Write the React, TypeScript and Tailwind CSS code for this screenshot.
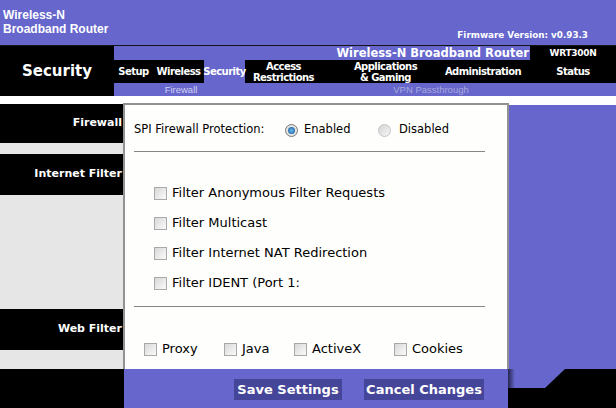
import React from "react";

const vd = "font-['DejaVu_Sans','Liberation_Sans',sans-serif]";
const ar = "font-['Liberation_Sans',Arial,sans-serif]";

function Check() {
  return (
    <span className="inline-block w-[13px] h-[13px] shrink-0 border border-[#a9a9a9] bg-linear-to-br from-[#d8d8d8] to-[#fbfbfb]" />
  );
}

function Radio({ on }: { on?: boolean }) {
  if (on) {
    return (
      <span className="w-[13px] h-[13px] shrink-0 rounded-full border border-[#7a7a7a] bg-[#e4e4e4] flex items-center justify-center">
        <span className="w-[7px] h-[7px] rounded-full bg-radial from-[#6ab8f0] to-[#14548f]" />
      </span>
    );
  }
  return (
    <span className="w-[13px] h-[13px] shrink-0 rounded-full border border-[#c4c4c4] bg-linear-to-br from-[#d4d4d4] to-[#f6f6f6]" />
  );
}

const navItems = [
  { label: "Setup", w: "w-[39px]" },
  { label: "Wireless", w: "w-[51px]" },
  { label: "Security", w: "w-[41px]", active: true },
  { label: "Access\nRestrictions", w: "w-[77px]" },
  { label: "Applications\n& Gaming", w: "w-[127px]" },
  { label: "Administration", w: "w-[68px]" },
];

const filters = [
  "Filter Anonymous Filter Requests",
  "Filter Multicast",
  "Filter Internet NAT Redirection",
  "Filter IDENT (Port 1:",
];

const webFilters = [
  { label: "Proxy", w: "w-[80px]" },
  { label: "Java", w: "w-[70px]" },
  { label: "ActiveX", w: "w-[100px]" },
  { label: "Cookies", w: "" },
];

export default function App() {
  return (
    <div className="w-[616px] h-[408px] overflow-hidden bg-white">
      {/* Top banner */}
      <div className="h-[45px] bg-[#6666cc] flex justify-between">
        <div className={`pl-[3px] pt-[8px] text-white font-bold text-[12px] leading-[14px] ${ar}`}>
          Wireless-N
          <br />
          Broadband Router
        </div>
        <div className={`self-end pb-[4px] pr-[28px] text-white font-bold text-[8.8px] leading-[11px] ${vd}`}>
          Firmware Version: v0.93.3
        </div>
      </div>
      <div className="h-px bg-[#151515]" />

      {/* Navigation */}
      <div className="h-[50px] flex">
        <div className={`w-[114px] bg-black flex items-center justify-center text-white font-bold text-[15px] ${vd}`}>
          Security
        </div>
        <div className="flex-1 flex flex-col">
          <div className="h-[14px] flex">
            <div className={`flex-1 bg-[#6666cc] text-right pr-px text-white font-bold text-[11.5px] leading-[14px] ${vd}`}>
              Wireless-N Broadband Router
            </div>
            <div className={`w-[86px] bg-black text-center text-white font-bold text-[9px] tracking-[-0.3px] leading-[14px] ${vd}`}>
              WRT300N
            </div>
          </div>
          <div className={`h-[23px] bg-black flex text-white font-bold text-[10px] tracking-[-0.55px] leading-[11px] ${vd}`}>
            {navItems.map((n) => (
              <div
                key={n.label}
                className={`${n.w} flex items-center justify-center text-center whitespace-pre ${n.active ? "bg-[#6666cc]" : ""}`}
              >
                {n.label}
              </div>
            ))}
            <div className="w-[13px]" />
            <div className="w-[86px] flex items-center justify-center">Status</div>
          </div>
          <div className={`h-[13px] bg-[#6666cc] flex text-[9.5px] leading-[13px] ${ar}`}>
            <div className="w-[134px] text-center text-[#d2d2f2]">Firewall</div>
            <div className="w-[366px] text-center text-[#a9a9dc]">VPN Passthrough</div>
          </div>
        </div>
      </div>

      <div className="h-[7px]" />

      {/* Main */}
      <div className="h-[266px] flex">
        <div className={`w-[123px] flex flex-col text-white font-bold text-[11px] ${vd}`}>
          <div className="h-px" />
          <div className="h-[39px] bg-black flex items-center justify-end pr-px">Firewall</div>
          <div className="h-[11px] bg-[#e6e6e6]" />
          <div className="h-[41px] bg-black flex items-center justify-end pr-px whitespace-nowrap overflow-hidden">
            Internet Filter
          </div>
          <div className="h-[114px] bg-[#e6e6e6]" />
          <div className="h-[41px] bg-black flex items-center justify-end pr-px">Web Filter</div>
          <div className="flex-1 bg-[#e6e6e6]" />
        </div>

        <div className={`w-[386px] border-2 border-b-0 border-[#929292] bg-[#fefefc] text-black ${vd}`}>
          <div className="h-[24px] mt-[13px] pl-[9px] flex items-center text-[11.5px]">
            <span className="w-[151px]">SPI Firewall Protection:</span>
            <Radio on />
            <span className="w-[80px] pl-[6px]">Enabled</span>
            <Radio />
            <span className="pl-[8px]">Disabled</span>
          </div>
          <div className="mt-[9px] ml-[9px] w-[351px] h-px bg-[#858585]" />

          <div className="mt-[26px] flex flex-col text-[13px]">
            {filters.map((f) => (
              <div key={f} className="h-[30px] pl-[29px] flex items-center gap-[5px] whitespace-nowrap">
                <Check />
                <span>{f}</span>
              </div>
            ))}
          </div>

          <div className="mt-[8px] ml-[9px] w-[351px] h-px bg-[#858585]" />

          <div className="mt-[27px] h-[30px] pl-[19px] flex items-center text-[13px]">
            {webFilters.map((w) => (
              <div key={w.label} className={`${w.w} flex items-center gap-[5px]`}>
                <Check />
                <span>{w.label}</span>
              </div>
            ))}
          </div>
        </div>

        <div className="flex-1 border-t-2 border-white bg-[#6666cc]" />
      </div>

      {/* Footer */}
      <div className="h-[39px] flex">
        <div className="w-[124px] bg-black" />
        <div className={`w-[384px] bg-[#6666cc] flex items-start pt-[10px] pl-[110px] gap-[22px] text-white font-bold text-[13px] ${vd}`}>
          <button className="w-[108px] h-[21px] bg-[#454599] leading-[21px] text-center">Save Settings</button>
          <button className="w-[120px] h-[21px] bg-[#454599] leading-[21px] text-center">Cancel Changes</button>
        </div>
        <div className="flex-1 bg-black">
          <svg width="108" height="39" viewBox="0 0 108 39" className="block">
            <defs>
              <linearGradient id="sh" x1="0" x2="1" y1="0" y2="0">
                <stop offset="0" stopColor="#26264f" />
                <stop offset="0.12" stopColor="#6666cc" />
                <stop offset="1" stopColor="#6666cc" />
              </linearGradient>
            </defs>
            <polygon points="0,0 57,0 37,19 0,19" fill="url(#sh)" />
          </svg>
        </div>
      </div>
    </div>
  );
}
